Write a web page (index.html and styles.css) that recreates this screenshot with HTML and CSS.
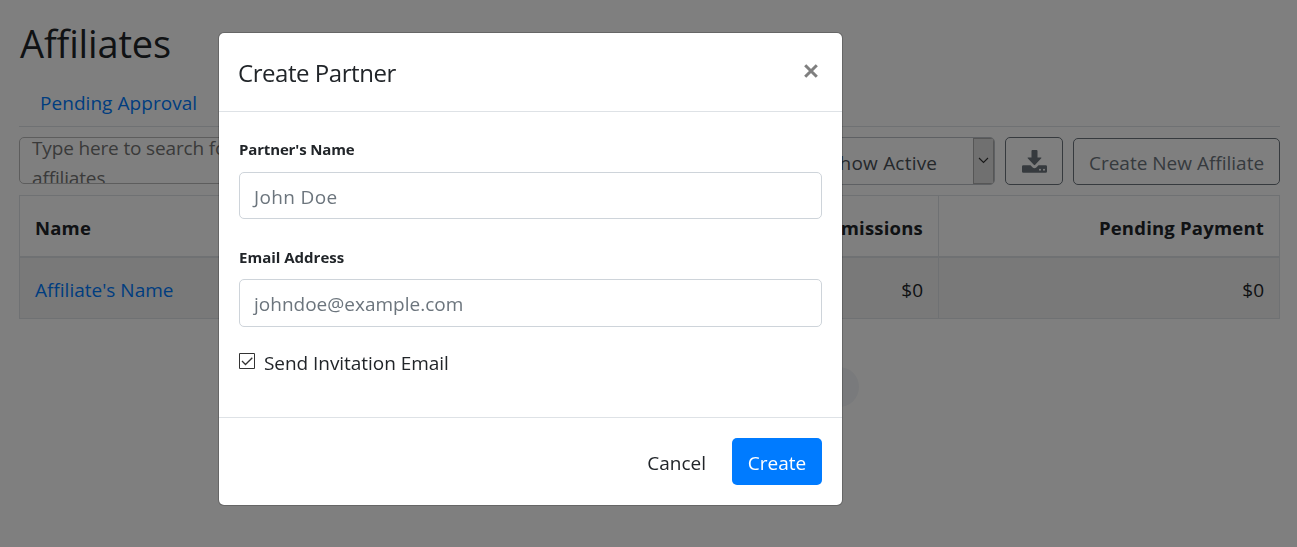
FILE: index.html
```
<!DOCTYPE html>
<html lang="en">
<head>
<meta charset="utf-8">
<title>Affiliates</title>
<link rel="stylesheet" href="styles.css">
</head>
<body>
<main class="page">
  <h1 class="page-title"><span>Affiliates</span></h1>
  <nav class="tabs"><a class="tab">Pending Approval</a></nav>
  <div class="toolbar">
    <div class="search"><span class="search-hint">Type here to search for affiliates</span></div>
    <div class="select">
      <span class="select-value">Show Active</span>
      <span class="select-arrow"><svg width="11" height="7" viewBox="0 0 11 7"><path d="M1 1l4.500 4.500L10 1" fill="none" stroke="#333" stroke-width="1.100"/></svg></span>
    </div>
    <button class="btn-outline btn-icon" aria-label="Download">
      <svg width="25" height="23" viewBox="0 0 25 23">
        <path fill="#6c757d" fill-rule="evenodd" d="M10.400 0h4.200q.9 0 .9.9V7.500h3.400q1.100 0 .4.8l-6.100 6.500q-.7.7-1.400 0L5.700 8.300q-.7-.8.400-.8h3.400V.9q0-.9.900-.9zM1.300 15.200h7.200l2.200 2.200q1.800 1.500 3.600 0l2.200-2.200h7.200q1.300 0 1.300 1.200v5q0 1.300-1.300 1.300H1.300Q0 22.700 0 21.400v-5q0-1.200 1.300-1.200zM18 18.800a1 1 0 1 0 0 2 1 1 0 0 0 0-2zm4 0a1 1 0 1 0 0 2 1 1 0 0 0 0-2z"/>
      </svg>
    </button>
    <button class="btn-outline btn-new"><span>Create New Affiliate</span></button>
  </div>
  <div class="table">
    <div class="row row-head">
      <div class="cell">Name</div><div class="cell num">Commissions</div><div class="cell num">Pending Payment</div>
    </div>
    <div class="row row-body">
      <div class="cell"><a class="link">Affiliate's Name</a></div><div class="cell num">$0</div><div class="cell num">$0</div>
    </div>
  </div>
  <div class="pager"><span class="pager-dot"></span></div>
</main>
<div class="backdrop">
  <section class="modal">
    <header class="modal-header">
      <h2 class="modal-title">Create Partner</h2>
      <svg class="close" width="14" height="14" viewBox="0 0 14 14"><path d="M1.200 1.200l11.600 11.600M12.800 1.200L1.200 12.800" stroke="#7f7f7f" stroke-width="3"/></svg>
    </header>
    <div class="modal-body">
      <label class="label label-name">Partner's Name</label>
      <div class="input"><span class="hint-name">John Doe</span></div>
      <label class="label label-email">Email Address</label>
      <div class="input input-email"><span class="hint-email">johndoe@example.com</span></div>
      <div class="check">
        <svg width="16" height="16" viewBox="0 0 16 16"><path d="M.5.500h15v15H.5z" fill="#fff" stroke="#333"/><path d="M3 8l3.500 3.500L13.300 4.700" fill="none" stroke="#333" stroke-width="1.300"/></svg>
        <span class="check-text">Send Invitation Email</span>
      </div>
    </div>
    <footer class="modal-footer">
      <span class="cancel">Cancel</span>
      <button class="create">Create</button>
    </footer>
  </section>
</div>
</body>
</html>
```
FILE: styles.css
```
* { box-sizing: border-box; }
body {
  margin: 0;
  height: 547px;
  overflow: hidden;
  background: #fff;
  color: #212529;
  font: 19px/30px "Open Sans", "Noto Sans", sans-serif;
}
.page { padding: 20px 17px 0 19px; }
.page-title { margin: 0; height: 60px; padding-left: 1px; font-size: 38px; font-weight: 400; line-height: 47px; letter-spacing: -0.15px; }
.tabs { height: 47px; padding: 8px 21px 0; border-bottom: 1px solid #dee2e6; }
.tab, .link { color: #007bff; }
.tab { letter-spacing: 0.05px; }
.toolbar { display: flex; gap: 10px; height: 48px; margin-top: 10px; }
.search {
  width: 480px; height: 47px; overflow: hidden; padding: 0 12px;
  border: 1px solid #bbb; border-radius: 5px; color: #757575;
}
.search-hint { display: block; width: 210px; margin-top: -5px; letter-spacing: -0.15px; }
.select {
  display: flex; width: 200px; height: 48px; margin-left: auto;
  border: 1px solid #bcc1c6; border-radius: 5px; overflow: hidden; color: #495057;
}
.select-value { flex: 1; padding: 10px 0 0 33px; letter-spacing: 0.2px; }
.select-arrow { display: flex; align-items: center; justify-content: center; width: 21px; padding-bottom: 2px; background: #e1e1e1; border: 1px solid #adadad; }
.btn-outline {
  height: 48px; padding: 0; border: 1px solid #6c757d; border-radius: 5px;
  background: none; color: #6c757d; font: inherit;
}
.btn-icon { display: flex; justify-content: center; align-items: center; width: 58px; padding-top: 1px; }
.btn-new { width: 207px; height: 47px; margin-top: 1px; padding-top: 3px; }
.table { margin-top: 10px; border: 1px solid #dee2e6; }
.row { display: grid; grid-template-columns: 500px 1fr 341px; }
.row-head { height: 62px; font-weight: 700; border-bottom: 2px solid #dee2e6; font-size: 18.5px; letter-spacing: 0.2px; }
.row-body { height: 60px; background: #f2f2f2; }
.cell { padding: 17px 15px 0; border-left: 1px solid #dee2e6; }
.cell:first-child { border-left: 0; }
.num { text-align: right; }
.pager { display: flex; justify-content: flex-end; padding: 48px 421px 0 0; }
.pager-dot { width: 40px; height: 40px; border-radius: 50%; background: #f2f5f8; }
.backdrop { position: fixed; inset: 0; padding: 32px 0 0 218px; background: rgba(0, 0, 0, 0.5); }
.modal { width: 625px; height: 474px; border: 1px solid rgba(0, 0, 0, 0.2); border-radius: 6px; background: #fff; background-clip: padding-box; }
.modal-header { display: flex; justify-content: space-between; height: 79px; padding: 21px 24px 0 19px; border-bottom: 1px solid #dee2e6; }
.modal-title { margin: 0; font-size: 24px; font-weight: 400; line-height: 38px; letter-spacing: -0.45px; }
.close { margin-top: 10px; }
.modal-body { height: 305px; padding: 22px 20px 0; }
.label { display: block; height: 38px; font-size: 15px; font-weight: 700; line-height: 30px; }
.label-name { letter-spacing: -0.15px; }
.label-email { height: 37px; }
.input { height: 47px; margin-bottom: 23px; padding: 9px 14px 0; border: 1px solid #ced4da; border-radius: 5px; color: #6c757d; }
.hint-name { letter-spacing: 0.35px; }
.input-email { height: 48px; margin-bottom: 21px; }
.check { display: flex; gap: 9px; }
.check svg { margin-top: 5px; }
.check-text { letter-spacing: -0.05px; }
.modal-footer { display: flex; justify-content: flex-end; gap: 26px; height: 88px; padding: 20px; border-top: 1px solid #dee2e6; }
.cancel { padding-top: 10px; }
.create { width: 90px; height: 47px; padding: 2px 0 0; border: 0; border-radius: 5px; background: #007bff; color: #fff; font: inherit; }
```
